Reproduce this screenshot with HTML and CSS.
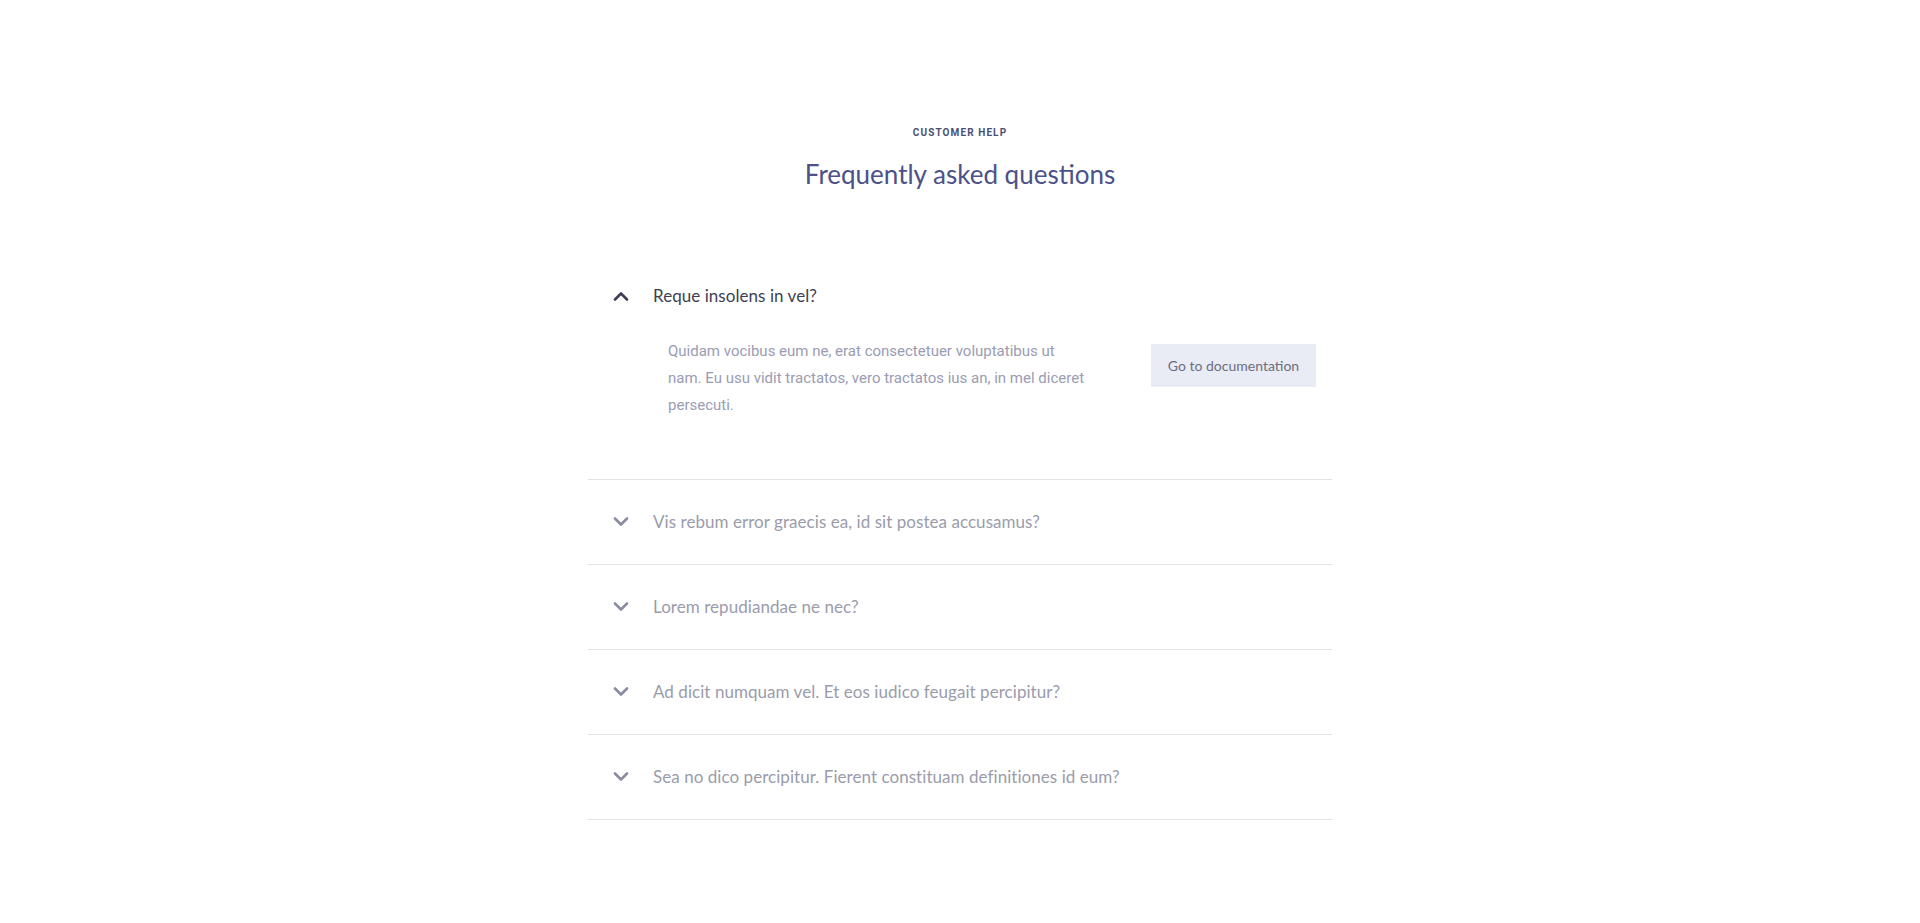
FILE: index.html
```html
<!DOCTYPE html>
<html lang="en">
<head>
<meta charset="utf-8">
<title>FAQ</title>
<link rel="stylesheet" href="styles.css">
</head>
<body>
<section class="faq">
  <header class="faq-head">
    <p class="eyebrow">CUSTOMER HELP</p>
    <h1 class="title">Frequently asked questions</h1>
  </header>
  <div class="accordion">
    <div class="item open">
      <div class="q">
        <svg class="chev" viewBox="0 0 16 10" width="16" height="10"><path d="M2 8.5 L8 2.5 L14 8.5" fill="none" stroke="currentColor" stroke-width="2.6" stroke-linecap="round" stroke-linejoin="round"/></svg>
        <span class="q-text">Reque insolens in vel?</span>
      </div>
      <div class="a">
        <p class="a-text">Quidam vocibus eum ne, erat consectetuer voluptatibus ut nam. Eu usu vidit tractatos, vero tractatos ius an, in mel diceret persecuti.</p>
        <a class="doc-btn" href="#">Go to documentation</a>
      </div>
    </div>
    <div class="item">
      <div class="q">
        <svg class="chev" viewBox="0 0 16 10" width="16" height="10"><path d="M2 1.5 L8 7.5 L14 1.5" fill="none" stroke="currentColor" stroke-width="2.6" stroke-linecap="round" stroke-linejoin="round"/></svg>
        <span class="q-text">Vis rebum error graecis ea, id sit postea accusamus?</span>
      </div>
    </div>
    <div class="item">
      <div class="q">
        <svg class="chev" viewBox="0 0 16 10" width="16" height="10"><path d="M2 1.5 L8 7.5 L14 1.5" fill="none" stroke="currentColor" stroke-width="2.6" stroke-linecap="round" stroke-linejoin="round"/></svg>
        <span class="q-text">Lorem repudiandae ne nec?</span>
      </div>
    </div>
    <div class="item">
      <div class="q">
        <svg class="chev" viewBox="0 0 16 10" width="16" height="10"><path d="M2 1.5 L8 7.5 L14 1.5" fill="none" stroke="currentColor" stroke-width="2.6" stroke-linecap="round" stroke-linejoin="round"/></svg>
        <span class="q-text">Ad dicit numquam vel. Et eos iudico feugait percipitur?</span>
      </div>
    </div>
    <div class="item">
      <div class="q">
        <svg class="chev" viewBox="0 0 16 10" width="16" height="10"><path d="M2 1.5 L8 7.5 L14 1.5" fill="none" stroke="currentColor" stroke-width="2.6" stroke-linecap="round" stroke-linejoin="round"/></svg>
        <span class="q-text">Sea no dico percipitur. Fierent constituam definitiones id eum?</span>
      </div>
    </div>
  </div>
</section>
</body>
</html>
```

FILE: styles.css
```css
* { box-sizing: border-box; }
html, body { margin: 0; padding: 0; background: #fff; }
body { font-family: "Lato", "Noto Sans", sans-serif; }

.faq {
  width: 744px;
  margin: 0 auto;
  padding-top: 126px;
}

.faq-head { text-align: center; }

.eyebrow {
  margin: 0;
  font-family: "Roboto", sans-serif;
  font-weight: 700;
  font-size: 10px;
  line-height: 14px;
  letter-spacing: 1.1px;
  color: #4b4f75;
}

.title {
  margin: 18px 0 0;
  font-family: "Lato", sans-serif;
  font-weight: 400;
  font-size: 26px;
  line-height: 32px;
  color: #4c5189;
}

.accordion { margin-top: 64px; }

.item { border-bottom: 1px solid #e3e4e8; }

.q {
  display: flex;
  align-items: center;
  gap: 24px;
  padding: 30px 0 30px 25px;
  color: #8a8ca0;
}

.chev { flex: none; display: block; }

.q-text {
  font-size: 17px;
  line-height: 24px;
  color: #9a9cab;
  letter-spacing: 0.05px;
}

.item.open .q { color: #3d3f55; }
.item.open .q-text { color: #3d3f55; }

.a {
  display: flex;
  align-items: flex-start;
  justify-content: space-between;
  padding: 0 16px 60px 80px;
}

.a-text {
  margin: 0;
  width: 420px;
  font-family: "Roboto", sans-serif;
  font-size: 15px;
  line-height: 27px;
  color: #9a9cb3;
}

.doc-btn {
  margin-top: 6px;
  width: 165px;
  height: 43px;
  display: flex;
  align-items: center;
  justify-content: center;
  background: #e9ebf5;
  color: #6b6e80;
  font-size: 14px;
  text-decoration: none;
}
```
